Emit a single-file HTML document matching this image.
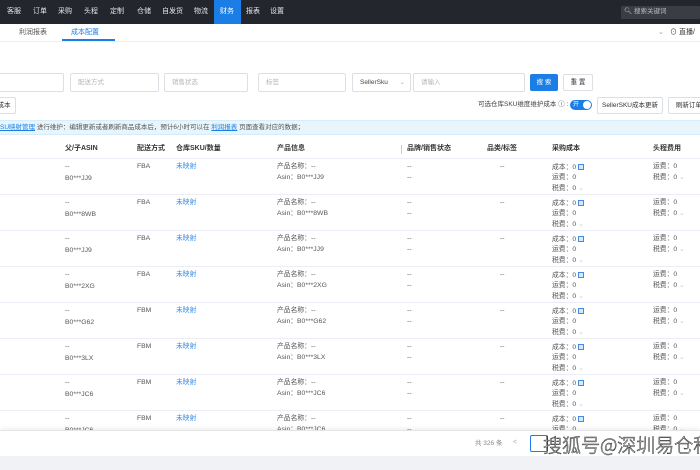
<!DOCTYPE html>
<html><head><meta charset="utf-8"><style>
*{margin:0;padding:0;box-sizing:border-box}
body{width:700px;height:470px;overflow:hidden;background:#fff;font-family:"Liberation Sans","Noto Sans CJK SC",sans-serif;font-size:7px;color:#333;position:relative;line-height:1.15}
.a{position:absolute;white-space:nowrap}
.nav{position:absolute;left:0;top:0;width:700px;height:24px;background:#23262d}
.nav span{position:absolute;top:8px;color:#e8e8e8;font-size:7px}
.inp{position:absolute;height:19px;border:1px solid #dcdfe6;border-radius:2px;background:#fff;color:#b5b5b5;padding:5px 7px;font-size:6.5px}
.btn{position:absolute;height:17px;border:1px solid #dcdfe6;border-radius:2px;background:#fff;color:#333;font-size:6.5px;text-align:center;line-height:15px}
.th{position:absolute;top:145px;font-weight:bold;font-size:7px;color:#333;line-height:1}
.row{position:absolute;left:0;width:700px;height:36px;border-bottom:1px solid #ebeef5}
.row span{position:absolute;font-size:6.8px;color:#555;white-space:nowrap;line-height:1}
.bl{color:#3a8ee6!important}
.ic{display:inline-block;width:6px;height:6px;border:1px solid #3a8ee6;background:#dbe9fb;vertical-align:middle;margin-left:2px}
</style></head><body>
<div class="nav">
<span style="left:7px">客服</span><span style="left:33px">订单</span><span style="left:58px">采购</span><span style="left:84px">头程</span><span style="left:110px">定制</span><span style="left:137px">仓储</span><span style="left:162px">自发货</span><span style="left:194px">物流</span>
<div style="position:absolute;left:214px;top:0;width:27px;height:24px;background:#1a7ee6"></div><span style="left:220px;color:#fff">财务</span>
<span style="left:246px">报表</span><span style="left:270px">设置</span>
<div style="position:absolute;left:621px;top:6px;width:79px;height:13px;background:#3a3d44;border-radius:1px"></div><span style="left:624px;top:8px;color:#bbb;font-size:6.5px">🔍︎ 搜索关键词</span>
</div>
<div class="a" style="left:19px;top:29px;color:#555">利润报表</div>
<div class="a" style="left:71px;top:29px;color:#1a7ee6">成本配置</div>
<div class="a" style="left:62px;top:39px;width:53px;height:2px;background:#1a7ee6"></div>
<div class="a" style="left:0;top:41px;width:700px;height:1px;background:#eee"></div>
<div class="a" style="left:658px;top:29px;color:#999">⌄</div>
<div class="a" style="left:670px;top:29px;color:#333">⊙ 直播/</div>

<div class="inp" style="left:-4px;top:73px;width:68px"></div>
<div class="inp" style="left:70px;top:73px;width:89px">配送方式</div>
<div class="inp" style="left:164px;top:73px;width:84px">销售状态</div>
<div class="inp" style="left:258px;top:73px;width:88px">标签</div>
<div class="inp" style="left:352px;top:73px;width:59px;color:#444">SellerSku<span style="position:absolute;right:5px;color:#aaa">⌄</span></div>
<div class="inp" style="left:413px;top:73px;width:112px">请输入</div>
<div class="btn" style="left:530px;top:74px;width:28px;background:#1a7ee6;border-color:#1a7ee6;color:#fff">搜 索</div>
<div class="btn" style="left:563px;top:74px;width:30px">重 置</div>

<div class="btn" style="left:-8px;top:97px;width:24px">成本</div>
<div class="a" style="left:478px;top:101px;font-size:6.5px;color:#444">可选仓库SKU维度维护成本 ⓘ :</div>
<div class="a" style="left:570px;top:100px;width:22px;height:10px;border-radius:5px;background:#1a7ee6;color:#fff;font-size:6px;padding-left:3px;line-height:10px">开<span style="position:absolute;right:1px;top:1px;width:8px;height:8px;border-radius:4px;background:#fff"></span></div>
<div class="btn" style="left:597px;top:97px;width:66px">SellerSKU成本更新</div>
<div class="btn" style="left:668px;top:97px;width:40px">&nbsp;刷新订单</div>

<div class="a" style="left:0;top:120px;width:700px;height:15px;background:#e8f5fc;border-top:1px solid #d5ecf9;border-bottom:1px solid #d5ecf9"></div>
<div class="a" style="left:0;top:124px;font-size:6.5px;color:#555"><span style="color:#1a7ee6;text-decoration:underline">SU映射管理</span> 进行维护：编辑更新或者刷新商品成本后，预计6小时可以在 <span style="color:#1a7ee6;text-decoration:underline">利润报表</span> 页面查看对应的数据；</div>

<div class="th" style="left:65px">父/子ASIN</div>
<div class="th" style="left:137px">配送方式</div>
<div class="th" style="left:176px">仓库SKU/数量</div>
<div class="th" style="left:277px">产品信息</div>
<div class="a" style="left:401px;top:145px;width:1px;height:9px;background:#ccc"></div>
<div class="th" style="left:407px">品牌/销售状态</div>
<div class="th" style="left:487px">品类/标签</div>
<div class="th" style="left:552px">采购成本</div>
<div class="th" style="left:653px">头程费用</div>
<div class="a" style="left:0;top:158px;width:700px;height:1px;background:#ebeef5"></div>

<div id="rows"></div>
<script>
var d=[["FBA","JJ9"],["FBA","8WB"],["FBA","JJ9"],["FBA","2XG"],["FBM","G62"],["FBM","3LX"],["FBM","JC6"],["FBM","JC6"]];
var h="";d.forEach(function(r,i){var t=159+i*36;
h+='<div class="row" style="top:'+t+'px"><span style="left:65px;top:5px">--</span><span style="left:65px;top:17px">B0***'+r[1]+'</span><span style="left:137px;top:5px">'+r[0]+'</span><span class="bl" style="left:176px;top:5px">未映射</span><span style="left:277px;top:5px">产品名称：--</span><span style="left:277px;top:16px">Asin：B0***'+r[1]+'</span><span style="left:407px;top:5px">--</span><span style="left:407px;top:16px">--</span><span style="left:500px;top:5px">--</span><span style="left:552px;top:5px">成本：0<i class="ic"></i></span><span style="left:552px;top:16px">运费：0</span><span style="left:552px;top:27px">税费：0 <b style="color:#ccc;font-weight:normal">⌄</b></span><span style="left:653px;top:5px">运费：0</span><span style="left:653px;top:16px">税费：0 <b style="color:#ccc;font-weight:normal">⌄</b></span></div>';});
document.getElementById("rows").innerHTML=h;
</script>
<div class="a" style="left:0;top:430px;width:700px;height:26px;background:#fff;border-top:1px solid #e5e5e5;box-shadow:0 -2px 4px rgba(0,0,0,.06)"></div>
<div class="a" style="left:475px;top:440px;color:#888;font-size:6.5px">共 326 条</div>
<div class="a" style="left:513px;top:439px;color:#aaa">&lt;</div>
<div class="a" style="left:530px;top:435px;width:18px;height:17px;border:1px solid #1a7ee6;border-radius:2px"></div>
<div class="a" style="left:0;top:456px;width:700px;height:14px;background:#f0f2f5"></div>
<div class="a" style="left:543px;top:434px;font-size:19px;color:#fff;-webkit-text-stroke:0.5px #222;font-family:'Noto Sans CJK SC',sans-serif;font-weight:300;line-height:22px">搜狐号@深圳易仓科</div>
</body></html>
